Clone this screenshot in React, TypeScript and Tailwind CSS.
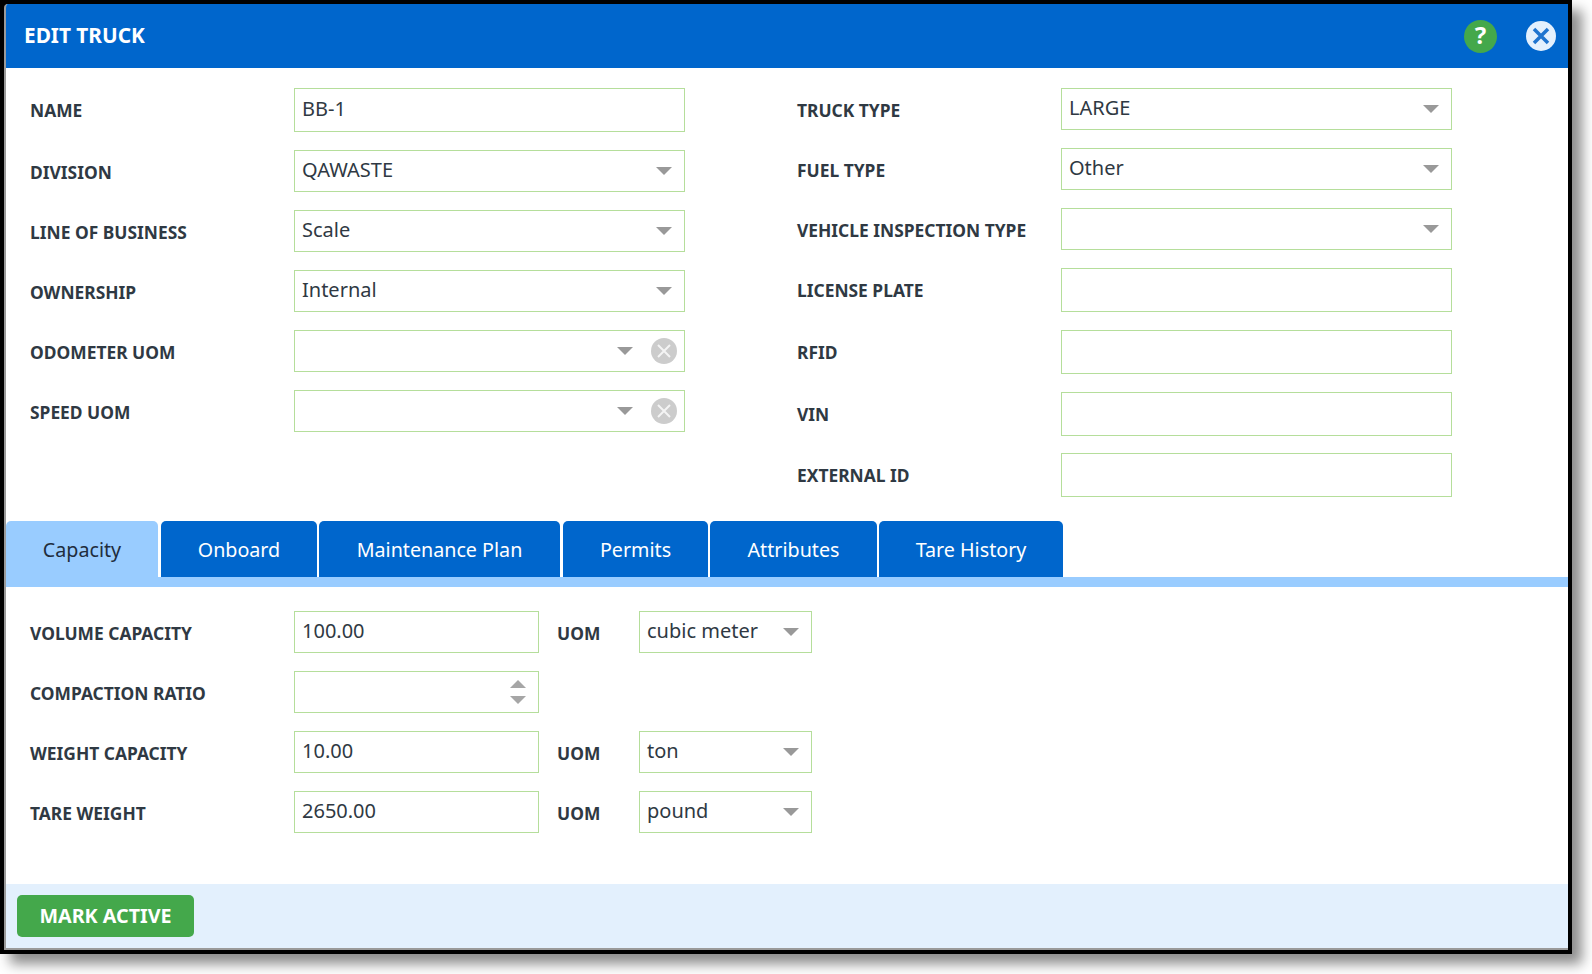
import type { ReactNode } from 'react';

const font = { fontFamily: '"Noto Sans", "Open Sans", sans-serif' };

function Arrow() {
  return (
    <svg width="16" height="8" viewBox="0 0 16 8" className="shrink-0">
      <path d="M0 0H16L8 8Z" fill="#999999" />
    </svg>
  );
}

function ClearIcon() {
  return (
    <svg width="26" height="26" viewBox="0 0 26 26" className="shrink-0">
      <circle cx="13" cy="13" r="13" fill="#cccccc" />
      <path d="M7 7L19 19M19 7L7 19" stroke="#f4f4f4" strokeWidth="2" />
    </svg>
  );
}

function Label({ children, short = false }: { children: string; short?: boolean }) {
  return <div className={`${short ? 'mt-[3px]' : 'mt-[2px]'} w-[264px] shrink-0 text-[17.4px] font-bold leading-none text-[#2f3943]`}>{children}</div>;
}

function TextBox({ value = '', width = 'w-[391px]', tall = true }: { value?: string; width?: string; tall?: boolean }) {
  return (
    <div className={`${width} ${tall ? 'h-[44px]' : 'h-[42px]'} flex items-center border border-[#b5de9b] pb-[3px] pl-[7px] text-[20px] text-[#2f3943]`}>
      {value}
    </div>
  );
}

function Select({ value = '', width = 'w-[391px]', clearable = false }: { value?: string; width?: string; clearable?: boolean }) {
  return (
    <div className={`${width} flex h-[42px] items-center border border-[#b5de9b] pl-[7px] pr-[12px] text-[20px] text-[#2f3943]`}>
      <span className="flex-1 pb-[2px]">{value}</span>
      <Arrow />
      {clearable && (
        <div className="ml-[18px] mr-[-5px]">
          <ClearIcon />
        </div>
      )}
    </div>
  );
}

function Row({ label, short = false, children }: { label: string; short?: boolean; children: ReactNode }) {
  return (
    <div className="flex items-center">
      <Label short={short}>{label}</Label>
      {children}
    </div>
  );
}

function UomRow({ label, value, uom }: { label: string; value: string; uom: string }) {
  return (
    <Row label={label} short>
      <TextBox value={value} width="w-[245px]" tall={false} />
      <div className="ml-[18px] mt-[3px] w-[82px] text-[17.4px] font-bold leading-none text-[#2f3943]">UOM</div>
      <Select value={uom} width="w-[173px]" />
    </Row>
  );
}

const tabs = [
  { name: 'Capacity', cls: 'w-[152px] bg-[#99ccff] text-[#1f2d3d]' },
  { name: 'Onboard', cls: 'ml-[1px] w-[156px] bg-[#0066cc] text-white' },
  { name: 'Maintenance Plan', cls: 'w-[241px] bg-[#0066cc] text-white' },
  { name: 'Permits', cls: 'ml-[1px] w-[145px] bg-[#0066cc] text-white' },
  { name: 'Attributes', cls: 'w-[167px] bg-[#0066cc] text-white' },
  { name: 'Tare History', cls: 'w-[184px] bg-[#0066cc] text-white' },
];

export default function App() {
  return (
    <div className="h-[974px] w-[1592px] overflow-hidden bg-white" style={font}>
      <div className="h-[954px] w-[1572px] bg-black p-[4px] shadow-[10px_10px_12px_rgba(0,0,0,0.45)]">
        <div className="flex h-full flex-col overflow-hidden rounded-tl-[4px] border-b-2 border-l-2 border-b-[#9a9a9a] border-l-[#9a9a9a] bg-white">
          {/* header */}
          <div className="flex h-[64px] shrink-0 items-center justify-between bg-[#0066cc] pl-[18px] pr-[12px]">
            <h1 className="text-[20.8px] font-bold text-white">EDIT TRUCK</h1>
            <div className="flex items-center gap-[29px]">
              <div className="flex h-[33px] w-[33px] items-center justify-center rounded-full bg-[#44a84b] pb-[3px] text-[24px] font-bold leading-none text-white">?</div>
              <svg width="30" height="30" viewBox="0 0 30 30">
                <circle cx="15" cy="15" r="15" fill="#e3f0fd" />
                <path d="M8 8L22 22M22 8L8 22" stroke="#1f74cf" strokeWidth="3.5" />
              </svg>
            </div>
          </div>

          {/* main fields */}
          <div className="flex gap-[112px] pl-[24px] pt-[20px]">
            <div className="flex flex-col gap-[18px]">
              <Row label="NAME"><TextBox value="BB-1" /></Row>
              <Row label="DIVISION" short><Select value="QAWASTE" /></Row>
              <Row label="LINE OF BUSINESS" short><Select value="Scale" /></Row>
              <Row label="OWNERSHIP" short><Select value="Internal" /></Row>
              <Row label="ODOMETER UOM" short><Select clearable /></Row>
              <Row label="SPEED UOM" short><Select clearable /></Row>
            </div>
            <div className="flex flex-col gap-[18px]">
              <Row label="TRUCK TYPE" short><Select value="LARGE" /></Row>
              <Row label="FUEL TYPE" short><Select value="Other" /></Row>
              <Row label="VEHICLE INSPECTION TYPE" short><Select /></Row>
              <Row label="LICENSE PLATE"><TextBox /></Row>
              <Row label="RFID"><TextBox /></Row>
              <Row label="VIN"><TextBox /></Row>
              <div className="-mt-px">
                <Row label="EXTERNAL ID"><TextBox /></Row>
              </div>
            </div>
          </div>

          {/* tabs */}
          <div className="mt-[24px] flex gap-[2px]">
            {tabs.map((t) => (
              <div key={t.name} className={`${t.cls} flex h-[56px] items-center justify-center rounded-t-[5px] pt-[2px] text-[19.7px]`}>
                {t.name}
              </div>
            ))}
          </div>
          <div className="h-[10px] shrink-0 bg-[#99ccff]" />

          {/* capacity tab */}
          <div className="flex flex-1 flex-col gap-[18px] pl-[24px] pt-[24px]">
            <UomRow label="VOLUME CAPACITY" value="100.00" uom="cubic meter" />
            <div className="flex items-center">
              <Label short>COMPACTION RATIO</Label>
              <div className="flex h-[42px] w-[245px] items-center justify-end border border-[#b5de9b] pr-[12px]">
                <svg width="16" height="24" viewBox="0 0 16 24">
                  <path d="M0 8L8 0L16 8Z" fill="#a6a6a6" />
                  <path d="M0 16H16L8 24Z" fill="#a6a6a6" />
                </svg>
              </div>
            </div>
            <UomRow label="WEIGHT CAPACITY" value="10.00" uom="ton" />
            <UomRow label="TARE WEIGHT" value="2650.00" uom="pound" />
          </div>

          {/* footer */}
          <div className="flex h-[64px] shrink-0 items-center bg-[#e3f0fd] pl-[11px]">
            <button className="h-[42px] w-[177px] rounded-[5px] bg-[#44a84b] text-[19.7px] font-bold text-white">MARK ACTIVE</button>
          </div>
        </div>
      </div>
    </div>
  );
}
